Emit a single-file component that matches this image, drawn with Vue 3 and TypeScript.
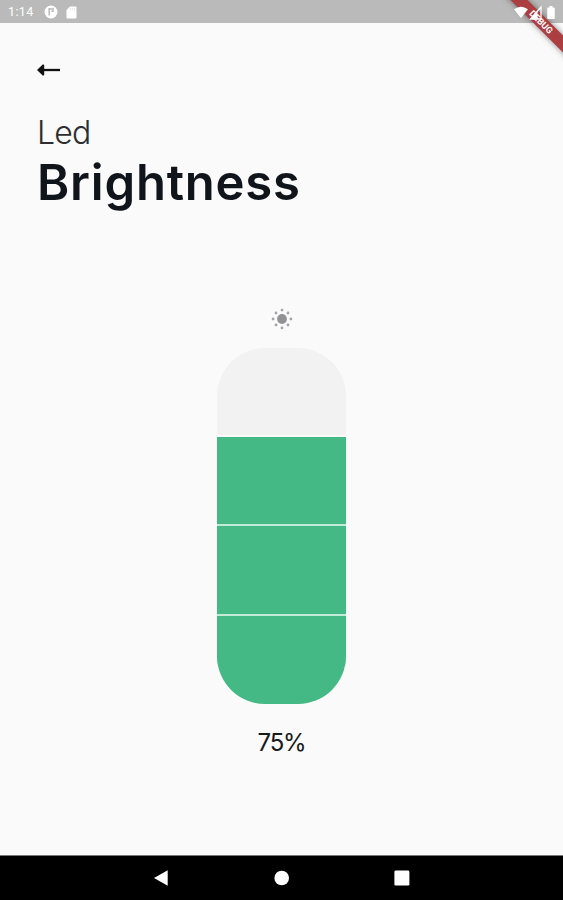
<script setup lang="ts">
import { ref, computed } from 'vue'

const level = ref<number>(3)
const steps = 4
const segments = computed(() =>
  Array.from({ length: steps }, (_, i) => ({ value: steps - i, on: steps - i <= level.value })),
)
const percent = computed(() => Math.round((level.value / steps) * 100))
</script>

<template>
  <div class="screen">
    <header class="status">
      <span class="time">1:14</span>
      <svg class="app-icon" viewBox="0 0 14 14">
        <circle cx="7" cy="7" r="6.5" fill="#fff" />
        <path d="M5.200 3v7.500M5.200 4H8M9 2.800v3.400H7.500" fill="none" stroke="#b9b9b9" stroke-width="1.5" />
      </svg>
      <svg class="card-icon" viewBox="0 0 11 13">
        <path d="M4 .5h5.5a1 1 0 0 1 1 1v10a1 1 0 0 1-1 1h-8a1 1 0 0 1-1-1V4z" fill="#fff" />
        <path d="M4.5 2v2M6.5 2v2M8.5 2v2" stroke="#ddd" stroke-width=".7" />
      </svg>
      <svg class="system-icons" viewBox="0 0 44 16">
        <path d="M1 5.200Q8 .2 15 5.200L8 14z" fill="#fff" />
        <path d="M28 3v12H17.500z" fill="none" stroke="#fff" stroke-width="1.3" />
        <path d="M24.500 7v8h-7z" fill="#fff" />
        <path d="M36.500 2h3v1.500h1.300q1 0 1 1V14q0 1-1 1h-5.600q-1 0-1-1V4.500q0-1 1-1h1.300z" fill="#fff" />
      </svg>
    </header>
    <div class="ribbon"><span>DEBUG</span></div>

    <main class="content">
      <button class="back" aria-label="Back">
        <svg viewBox="0 0 24 14">
          <path d="M5 7H23" stroke="#111" stroke-width="2.300" />
          <path d="M0 7L6 1.200L7.200 2V12L6 12.800z" fill="#111" />
        </svg>
      </button>
      <h2 class="device">Led</h2>
      <h1 class="title">Brightness</h1>

      <section class="control">
        <svg class="sun" viewBox="-11 -11 22 22">
          <circle r="4.900" fill="#929295" />
          <g fill="#a4a4a7">
            <circle cx="0" cy="-8.900" r="1.400" /><circle cx="0" cy="8.900" r="1.400" />
            <circle cx="-8.900" cy="0" r="1.400" /><circle cx="8.900" cy="0" r="1.400" />
            <circle cx="-6" cy="-6" r="1.400" /><circle cx="6" cy="-6" r="1.400" />
            <circle cx="-6" cy="6" r="1.400" /><circle cx="6" cy="6" r="1.400" />
          </g>
        </svg>
        <div class="slider">
          <div
            v-for="s in segments"
            :key="s.value"
            class="segment"
            :class="{ on: s.on }"
            @click="level = s.value"
          ></div>
        </div>
        <p class="percent">{{ percent }}%</p>
      </section>
    </main>

    <nav class="navbar">
      <svg viewBox="0 0 16 16"><path d="M0 8L13.700 .3V15.700z" fill="#fff" /></svg>
      <svg viewBox="0 0 16 16"><circle cx="7.700" cy="8" r="7.300" fill="#fff" /></svg>
      <svg viewBox="0 0 16 16"><rect x=".4" y=".6" width="15" height="15" rx="1.300" fill="#fff" /></svg>
    </nav>
  </div>
</template>

<style>
body {
  margin: 0;
}
</style>

<style scoped>
.screen {
  position: relative;
  box-sizing: border-box;
  width: 563px;
  height: 900px;
  display: flex;
  flex-direction: column;
  overflow: hidden;
  background: #fafafa;
  font-family: Inter, Roboto, sans-serif;
}
.status {
  flex: none;
  height: 23px;
  box-sizing: border-box;
  padding: 1px 6px 0 8px;
  display: flex;
  align-items: center;
  background: #bababa;
}
.time {
  width: 36px;
  color: #fff;
  font: 400 12.500px/22px Roboto, sans-serif;
  letter-spacing: 0.400px;
}
.app-icon {
  width: 14px;
  height: 14px;
}
.card-icon {
  width: 11px;
  height: 13px;
  margin-left: 8px;
}
.system-icons {
  width: 44px;
  height: 16px;
  margin-left: auto;
  position: relative;
  z-index: 2;
}
.ribbon {
  position: absolute;
  left: 491px;
  top: 16px;
  width: 100px;
  height: 12px;
  transform: rotate(45deg);
  background: #ac3e42;
  box-shadow: 0 0 6px rgba(0, 0, 0, 0.450);
  color: #fff;
  font: 700 9px/12px Roboto, sans-serif;
  text-align: center;
  z-index: 1;
}
.content {
  flex: 1;
  min-height: 0;
  display: flex;
  flex-direction: column;
  padding: 40px 37px 0;
}
.back {
  width: 24px;
  height: 14px;
  padding: 0;
  border: 0;
  background: none;
}
.back svg {
  display: block;
  width: 24px;
  height: 14px;
}
.device {
  margin: 36px 0 0;
  color: #2c2e32;
  font-size: 32px;
  font-weight: 300;
  line-height: 40px;
  letter-spacing: -0.800px;
}
.title {
  margin: 0;
  color: #10141b;
  font-size: 49px;
  font-weight: 600;
  line-height: 60px;
  letter-spacing: 0.800px;
}
.control {
  display: flex;
  flex-direction: column;
  align-items: center;
  margin-top: 95px;
}
.sun {
  width: 22px;
  height: 22px;
}
.slider {
  display: grid;
  grid-template-rows: 87px 87px 88px 88px;
  gap: 2px;
  width: 129px;
  height: 356px;
  margin-top: 18px;
  border-radius: 48px;
  overflow: hidden;
  background: #fafafa;
}
.segment {
  background: #f2f2f2;
}
.segment.on {
  background: #44b985;
}
.segment.on + .segment.on {
  box-shadow: 0 -2px #c3ead8;
}
.percent {
  margin: 24px 0 0;
  color: #17191d;
  font-size: 24px;
  line-height: 30px;
  letter-spacing: -1.200px;
}
.navbar {
  flex: none;
  box-sizing: border-box;
  height: 45px;
  border-top: 1px solid #777;
  display: flex;
  justify-content: center;
  align-items: center;
  gap: 104px;
  background: #000;
}
.navbar svg {
  width: 16px;
  height: 16px;
}
</style>
